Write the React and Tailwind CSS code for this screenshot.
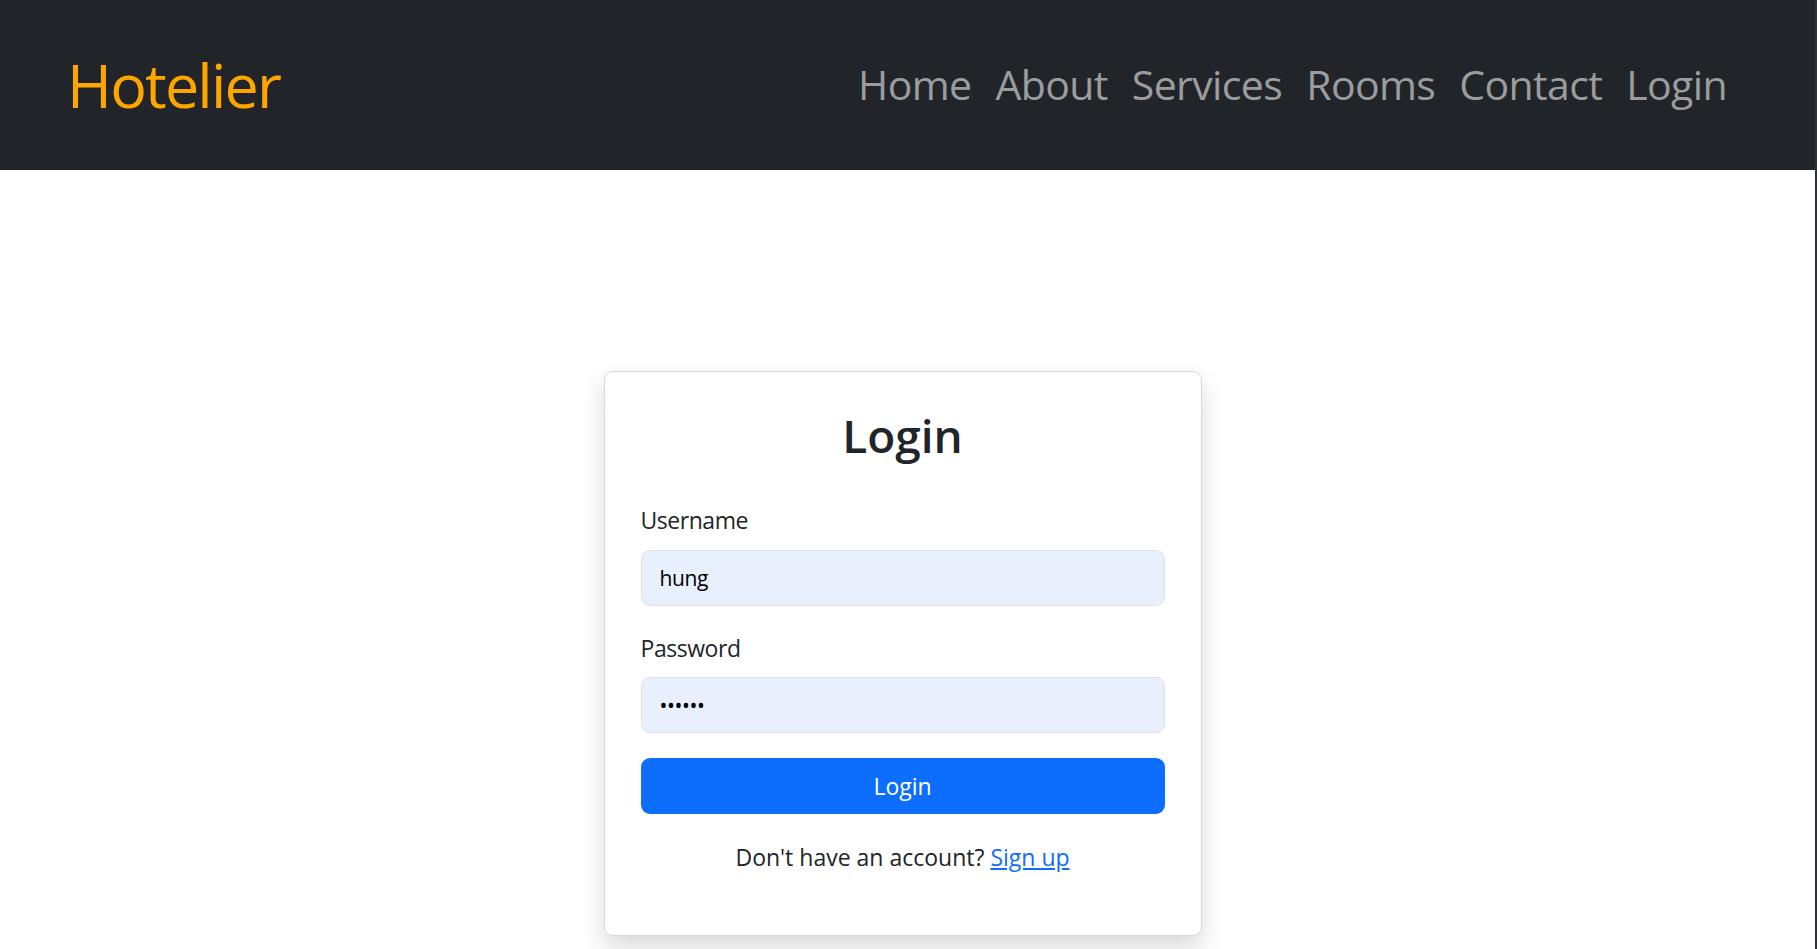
import { useState } from 'react'

const links = ['Home', 'About', 'Services', 'Rooms', 'Contact', 'Login']

function Navbar() {
  return (
    <nav className="flex h-[170px] items-center justify-between bg-[#212529] pl-[67px] pr-[76px]">
      <a href="#" className="text-[61px] leading-[1.2] tracking-[-0.03em] text-[#ffa500]">
        Hotelier
      </a>
      <ul className="flex items-center">
        {links.map((l) => (
          <li key={l}>
            <a href="#" className="block px-[12px] text-[41px] leading-[1.5] tracking-[-0.015em] text-[#9a9c9e]">
              {l}
            </a>
          </li>
        ))}
      </ul>
    </nav>
  )
}

function Field({ label, type, value }) {
  return (
    <div className="mb-[25px]">
      <label className="mb-[12px] block text-[23px] leading-[1.5] tracking-[-0.02em] text-[#212529]">{label}</label>
      <input
        type={type}
        defaultValue={value}
        className="block h-[56px] w-full rounded-[9px] border border-[#dee2e6] bg-[#e8f0fe] px-[18px] text-[21px] tracking-[-0.02em] text-black outline-none"
      />
    </div>
  )
}

export default function App() {
  const [user] = useState('hung')

  return (
    <div
      className="min-h-screen border-r-2 border-[#2f3136] bg-white"
      style={{ fontFamily: '"Open Sans", "Noto Sans", sans-serif' }}
    >
      <Navbar />
      <main className="flex justify-center pr-[10px] pt-[201px]">
        <div className="w-[598px] rounded-[9px] border border-[#d6d9dc] bg-white px-[36px] pb-[60px] pt-[36px] shadow-[0_12px_24px_rgba(0,0,0,0.15)]">
          <h2 className="mb-[40px] text-center text-[46px] font-semibold leading-[1.2] text-[#212529]">Login</h2>
          <Field label="Username" type="text" value={user} />
          <Field label="Password" type="password" value="123456" />
          <button
            type="button"
            className="h-[56px] w-full rounded-[9px] bg-[#0d6efd] text-[23px] leading-[1.5] text-white"
          >
            Login
          </button>
          <p className="mt-[26px] text-center text-[23px] leading-[1.5] text-[#212529]">
            Don't have an account?{' '}
            <a href="#" className="text-[#0d6efd] underline">
              Sign up
            </a>
          </p>
        </div>
      </main>
    </div>
  )
}
